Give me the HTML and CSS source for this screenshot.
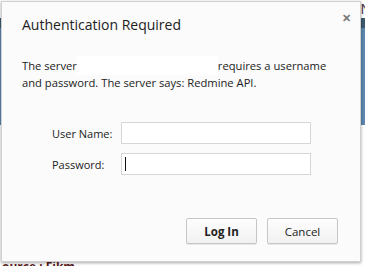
FILE: index.html
```html
<!DOCTYPE html>
<html lang="en">
<head>
    <meta charset="UTF-8">
    <title>Authentication Required</title>
    <link rel="stylesheet" href="styles.css">
</head>
<body>

    <div class="page">
        <div class="page-top">N</div>
        <div class="page-bar"></div>
        <div class="page-band"></div>
        <div class="page-foot">ource : Fikm</div>
    </div>

    <div class="dialog">
        <div class="dialog-head">
            <h1>Authentication Required</h1>
            <span class="close">&#x2715;</span>
        </div>

        <p class="message">The server<span class="hidden-host"></span>requires a username and password. The server says: Redmine API.</p>

        <div class="fields">
            <div class="row">
                <label for="user">User Name:</label>
                <div class="input" id="user"></div>
            </div>
            <div class="row">
                <label for="pass">Password:</label>
                <div class="input" id="pass"><span class="caret"></span></div>
            </div>
        </div>

        <div class="buttons">
            <button class="primary">Log In</button>
            <button>Cancel</button>
        </div>
    </div>

</body>
</html>
```

FILE: styles.css
```css
body {
    margin: 0;
    width: 365px;
    height: 266px;
    overflow: hidden;
    background-color: #fff;
    font-family: "Segoe UI", "Open Sans", "Noto Sans", sans-serif;
    color: #222;
}
.page {
    height: 266px;
    display: flex;
    flex-direction: column;
}
.page-top {
    height: 18px;
    text-align: right;
    font-size: 14px;
    line-height: 18px;
    color: #3a2535;
    margin-right: -6px;
}
.page-bar {
    height: 10px;
    background-color: #3e5a6e;
}
.page-band {
    height: 97px;
    background-color: #5c87b0;
}
.page-foot {
    margin-top: auto;
    height: 4px;
    font-size: 12px;
    font-weight: bold;
    line-height: 10px;
    color: #5a1a1a;
    padding-left: 2px;
    overflow: hidden;
}
.dialog {
    position: absolute;
    left: 1px;
    top: 1px;
    width: 358px;
    height: 259px;
    background-color: #fbfbfb;
    border: 1px solid #d0d0d0;
    box-shadow: 0 1px 3px rgba(0,0,0,0.35);
}
.dialog-head {
    display: flex;
    justify-content: space-between;
    align-items: flex-start;
    padding: 13px 9px 0 20px;
}
h1 {
    margin: 0;
    font-size: 14px;
    font-weight: normal;
    line-height: 20px;
    color: #222;
}
.close {
    font-size: 11px;
    font-weight: bold;
    color: #777;
    line-height: 12px;
    margin-top: -3px;
}
.message {
    margin: 21px 20px 0 20px;
    font-size: 11.2px;
    line-height: 15px;
    color: #222;
}
.hidden-host {
    display: inline-block;
    width: 141px;
    height: 19px;
    vertical-align: -5px;
    background-color: #fff;
}
.fields {
    margin-top: 32px;
    display: flex;
    flex-direction: column;
    gap: 9px;
}
.row {
    display: flex;
    align-items: center;
    padding-left: 50px;
}
label {
    width: 69px;
    font-size: 11px;
    color: #222;
}
.input {
    width: 185px;
    height: 20px;
    border: 1px solid #d6d6d6;
    background-color: #fff;
    display: flex;
    align-items: center;
    padding-left: 3px;
}
.caret {
    width: 1px;
    height: 14px;
    background-color: #111;
}
.buttons {
    margin-top: 43px;
    display: flex;
    justify-content: flex-end;
    gap: 10px;
    padding-right: 22px;
}
button {
    width: 71px;
    height: 26px;
    font-family: "Segoe UI", "Open Sans", "Noto Sans", sans-serif;
    font-size: 11.5px;
    color: #222;
    background: linear-gradient(#fdfdfd, #f1f1f1);
    border: 1px solid #c6c6c6;
    border-radius: 2px;
    box-shadow: 0 1px 0 rgba(0,0,0,0.08);
    padding: 0;
}
button.primary {
    font-weight: bold;
}
```
